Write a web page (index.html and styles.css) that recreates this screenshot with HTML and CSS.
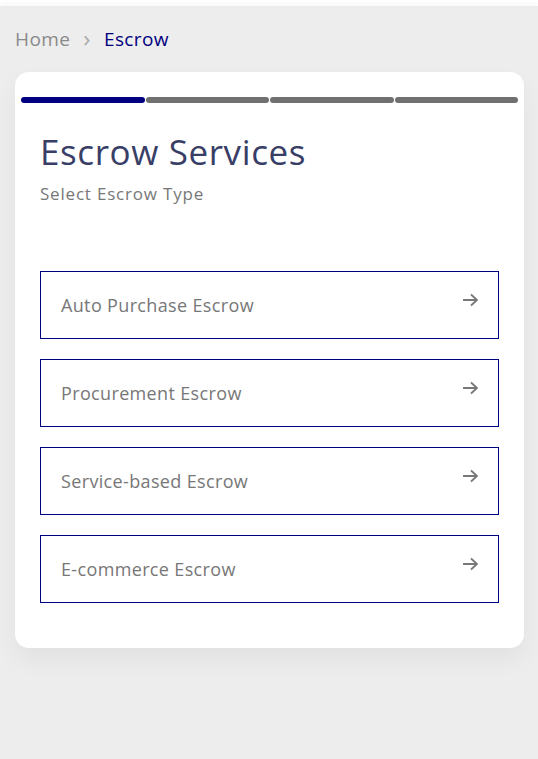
FILE: index.html
```html
<!DOCTYPE html>
<html lang="en">
<head>
    <meta charset="UTF-8">
    <meta name="viewport" content="width=device-width, initial-scale=1.0">
    <title>Escrow Services</title>
    <link rel="stylesheet" href="styles.css">
</head>
<body>
    <div class="page">
        <nav class="breadcrumb">
            <span class="crumb">Home</span>
            <span class="sep">&#8250;</span>
            <span class="crumb current">Escrow</span>
        </nav>

        <div class="card">
            <div class="steps">
                <span class="step active"></span>
                <span class="step"></span>
                <span class="step"></span>
                <span class="step"></span>
            </div>

            <div class="card-body">
                <h1>Escrow Services</h1>
                <p class="subtitle">Select Escrow Type</p>

                <div class="options">
                    <a class="option" href="#">
                        <span>Auto Purchase Escrow</span>
                        <svg class="arrow" width="17" height="14" viewBox="0 0 17 14"><path d="M1 7H15M9 1.5L15 7L9 12.5" fill="none" stroke="currentColor" stroke-width="1.8"/></svg>
                    </a>
                    <a class="option" href="#">
                        <span>Procurement Escrow</span>
                        <svg class="arrow" width="17" height="14" viewBox="0 0 17 14"><path d="M1 7H15M9 1.5L15 7L9 12.5" fill="none" stroke="currentColor" stroke-width="1.8"/></svg>
                    </a>
                    <a class="option" href="#">
                        <span>Service-based Escrow</span>
                        <svg class="arrow" width="17" height="14" viewBox="0 0 17 14"><path d="M1 7H15M9 1.5L15 7L9 12.5" fill="none" stroke="currentColor" stroke-width="1.8"/></svg>
                    </a>
                    <a class="option" href="#">
                        <span>E-commerce Escrow</span>
                        <svg class="arrow" width="17" height="14" viewBox="0 0 17 14"><path d="M1 7H15M9 1.5L15 7L9 12.5" fill="none" stroke="currentColor" stroke-width="1.8"/></svg>
                    </a>
                </div>
            </div>
        </div>
    </div>
</body>
</html>
```

FILE: styles.css
```css
body {
    margin: 0;
    background: #fff;
    font-family: "Open Sans", Arial, sans-serif;
}
.page {
    margin-top: 6px;
    min-height: 753px;
    background: #ededed;
    padding: 0 14px 0 15px;
    box-sizing: border-box;
    box-shadow: 0 -2px 6px rgba(0, 0, 0, 0.04);
}
.breadcrumb {
    display: flex;
    align-items: center;
    gap: 13px;
    padding-top: 19px;
    height: 47px;
    box-sizing: border-box;
    font-size: 19px;
    line-height: 27px;
    letter-spacing: 0.4px;
}
.crumb {
    color: #8a8a8a;
}
.sep {
    color: #aaa;
    font-size: 24px;
    margin-top: -3px;
}
.crumb.current {
    color: #000080;
}
.card {
    margin-top: 19px;
    background: #fff;
    border-radius: 14px;
    padding: 25px 6px 45px;
    box-shadow: 0 12px 24px rgba(0, 0, 0, 0.05);
}
.steps {
    display: flex;
    gap: 1px;
}
.step {
    flex: 1;
    height: 6px;
    border-radius: 3px;
    background: #707070;
}
.step.active {
    background: #000080;
}
.card-body {
    padding: 0 19px;
}
h1 {
    margin: 27px 0 0;
    font-size: 35px;
    font-weight: 500;
    line-height: 44px;
    letter-spacing: 0.6px;
    color: #383e66;
}
.subtitle {
    margin: 8px 0 0;
    font-size: 17px;
    line-height: 24px;
    letter-spacing: 0.8px;
    color: #777;
}
.options {
    display: flex;
    flex-direction: column;
    gap: 20px;
    margin-top: 65px;
}
.option {
    display: flex;
    align-items: center;
    justify-content: space-between;
    height: 68px;
    padding: 0 19px 0 20px;
    border: 1px solid #000080;
    box-sizing: border-box;
    font-size: 18px;
    letter-spacing: 0.35px;
    color: #777;
    text-decoration: none;
}
.arrow {
    color: #777;
    margin-bottom: 10px;
}
```
